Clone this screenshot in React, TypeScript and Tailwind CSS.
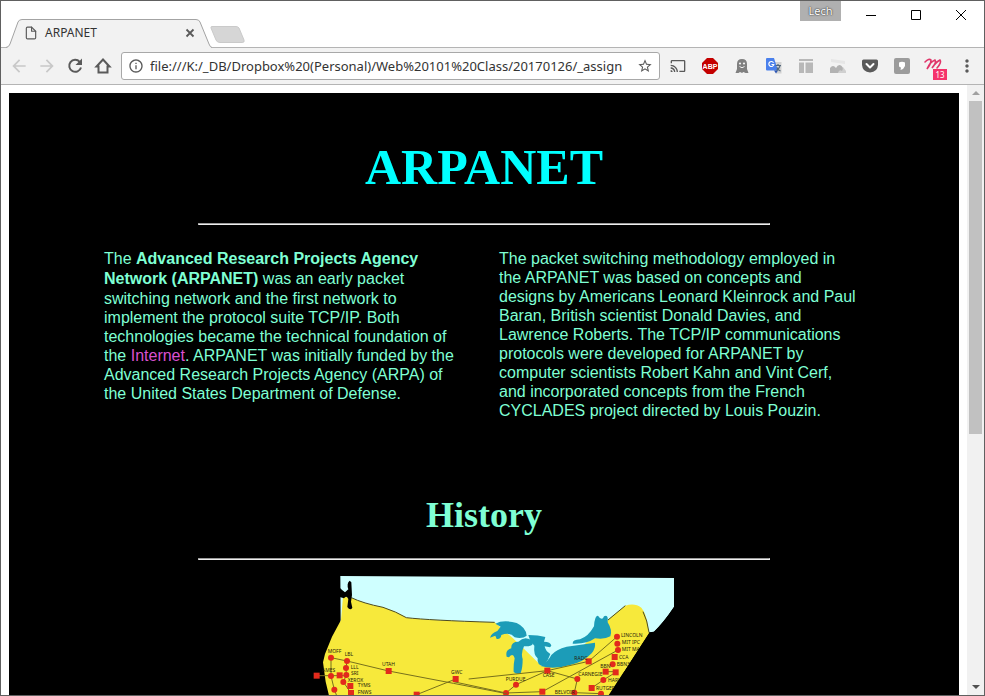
import React from "react";
import { FiFile } from "react-icons/fi";
import {
  MdArrowBack,
  MdArrowForward,
  MdInfoOutline,
  MdStarBorder,
  MdCast,
  MdMoreVert,
} from "react-icons/md";

type Node = [number, number, "c" | "s"];
type Label = [number, number, string];

function Marks({ nodes, labels }: { nodes: Node[]; labels: Label[] }) {
  return (
    <>
      {nodes.map(([x, y, kind]) =>
        kind === "c" ? (
          <circle key={`${x}-${y}`} cx={x} cy={y} r="9" fill="#e22a1c" />
        ) : (
          <rect key={`${x}-${y}`} x={x - 9} y={y - 9} width="18" height="18" fill="#e22a1c" />
        ),
      )}
      {labels.map(([x, y, text]) => (
        <text key={text} x={x} y={y} fontSize="15" fill="#26220a" className="font-['Noto_Sans',sans-serif]">
          {text}
        </text>
      ))}
    </>
  );
}

const westNodes: Node[] = [
  [93, 278, "c"], [141, 288, "c"], [138, 309, "c"], [139, 330, "c"], [119, 331, "s"],
  [93, 333, "c"], [50, 332, "s"], [130, 351, "c"], [151, 363, "s"], [153, 384, "s"],
  [103, 374, "c"], [266, 318, "s"], [467, 342, "s"], [350, 389, "s"],
];
const westLabels: Label[] = [
  [83, 263, "MOFF"], [134, 273, "LBL"], [152, 313, "LLL"], [153, 331, "SRI"], [143, 350, "XEROX"],
  [173, 367, "TYMS"], [173, 388, "FNWS"], [246, 303, "UTAH"], [453, 326, "GWC"], [66, 320, "AMES"],
];
const eastNodes: Node[] = [
  [411, 215, "c"], [412, 236, "c"], [414, 255, "c"], [404, 276, "s"], [398, 298, "c"],
  [377, 320, "s"], [407, 322, "s"], [370, 345, "c"], [335, 369, "s"], [363, 386, "c"],
  [326, 289, "s"], [292, 342, "c"], [202, 317, "s"], [108, 359, "c"], [78, 384, "c"],
  [187, 380, "s"], [283, 383, "c"],
];
const eastLabels: Label[] = [
  [423, 215, "LINCOLN"], [425, 236, "MIT IPC"], [425, 257, "MIT MAC"], [417, 281, "CCA"], [410, 303, "BBN30"],
  [361, 309, "BBN"], [384, 351, "HARV"], [348, 374, "RUTGERS"], [283, 285, "RADC"], [295, 333, "CARNEGIE"],
  [188, 336, "CASE"], [77, 347, "PURDUE"], [224, 387, "BELVOIR"],
];

function NetworkMap() {
  return (
    <svg viewBox="0 0 1086 360" className="w-[362px] shrink-0" role="img" aria-label="Map of the ARPANET">
      <path d="M82 3L1083 9V96Q1050 145 1023 170L1007 172L932 290H84Z" fill="#cfffff" />
      <path
        d="M90 65L115 68Q150 85 210 97Q250 110 280 128Q350 136 545 142L600 190L685 272L790 235L850 170L890 130L937 92Q965 82 985 98Q999 115 1003 145L1008 175L886 362H48L38 320L30 262L36 237L57 185L84 135Z"
        fill="#f7e93b"
      />
      <path d="M115 68Q150 85 210 97Q250 110 280 128Q350 136 545 142M885 135L937 92M990 110Q1003 135 1008 172" fill="none" stroke="#4c4a20" strokeWidth="3" />
      <path d="M110 17Q100 25 106 43L96 52Q86 44 80 38V66L93 70Q100 60 106 72L103 96Q112 108 118 98L114 80L117 60L115 22Z" fill="#000" />
      <g transform="translate(501 -30)">
        <path d="M30 218Q34 205 52 198L62 185L46 176Q70 163 110 174Q138 187 140 212Q128 222 104 217Q90 200 64 210Q62 224 50 222L46 212Z" fill="#1c9cb8" />
        <path d="M80 275Q75 255 94 250Q92 230 115 230Q135 210 158 228Q164 245 132 244Q122 265 128 282Q128 310 122 324Q110 330 101 321Q100 300 104 280Q99 262 87 277Z" fill="#1c9cb8" />
        <path d="M145 210Q175 210 196 216L192 230Q212 230 214 242L210 247L194 244Q196 258 211 267Q205 285 192 302Q170 303 173 280Q160 270 163 242Q150 230 145 210Z" fill="#1c9cb8" />
        <path d="M182 303Q203 292 214 270Q228 253 260 245L345 233Q347 250 335 265Q310 292 270 300Q220 315 182 303Z" fill="#1c9cb8" />
        <path d="M278 236Q277 224 300 223Q325 215 342 184Q344 150 354 152Q366 170 372 154Q386 146 383 172Q398 196 391 214Q375 224 345 220Q320 238 278 236Z" fill="#1c9cb8" />
        <path d="M-34 342L202 317L326 289L411 215M202 317L292 342L283 383L363 386M78 384L108 359L202 317M78 384L-80 350M78 384L187 380L414 255M377 320H407M335 369L370 345L407 322" fill="none" stroke="#77701c" strokeWidth="3" />
        <Marks nodes={eastNodes} labels={eastLabels} />
      </g>
      <g transform="translate(-39 -30)">
        <path d="M93 278L141 288L266 318L460 355M350 389L467 342M460 355L620 386M50 332H139M93 278V333L103 374L110 392M141 288L138 309L139 330L130 351L153 384" fill="none" stroke="#77701c" strokeWidth="3" />
        <Marks nodes={westNodes} labels={westLabels} />
      </g>
      <path d="M1009 174L888 362H1086V174Z" fill="#000" />
      <path d="M1083 96Q1050 145 1023 170L1009 174H1086V96Z" fill="#000" />
    </svg>
  );
}

function TitleBar() {
  return (
    <header className="flex h-[46px] shrink-0 bg-white">
      <div className="relative isolate mt-[18px] ml-[5px] flex h-7 w-[206px] items-center pr-[17px] pl-[18px]">
        <svg viewBox="0 0 206 29" className="absolute top-0 left-0 -z-10 h-[29px] w-[206px]" aria-hidden="true">
          <path d="M0 29Q3 28 4 25L12 3Q13 .5 16 .5H190Q193 .5 194 3L203 25Q204 28 206 29Z" fill="#f2f2f2" />
          <path d="M0 28.500Q3 28 4 25L12 3Q13 .5 16 .5H190Q193 .5 194 3L203 25Q204 28 206 28.500" fill="none" stroke="#a3a3a3" />
        </svg>
        <FiFile className="size-[14px] text-[#5a5a5a]" />
        <span className="ml-[7px] flex-1 font-['Noto_Sans',sans-serif] text-[12px] leading-4 text-[#333]">ARPANET</span>
        <button type="button" aria-label="Close tab">
          <svg viewBox="0 0 10 10" className="size-[10px]">
            <path d="M1.500 1.500L8.500 8.500M8.500 1.500L1.500 8.500" stroke="#5a5a5a" strokeWidth="1.800" />
          </svg>
        </button>
      </div>
      <button type="button" aria-label="New tab" className="mt-[25px] -ml-[2px] h-[17px] w-[35px]">
        <svg viewBox="0 0 35 17" className="h-[17px] w-[35px]">
          <path d="M2 .5H26Q28 .5 29 2L34 14Q35 16.500 32 16.500H10Q7 16.500 6 14L1 2Q.5 .5 2 .5Z" fill="#d6d6d6" stroke="#cacaca" />
        </svg>
      </button>
      <div className="ml-auto flex items-start">
        <button type="button" className="h-5 w-[41px] bg-[#b0b0b0] font-['Noto_Sans',sans-serif] text-[11px] leading-5 text-white [text-shadow:0_0_2px_#333,0_0_1px_#333]">
          Lech
        </button>
        <button type="button" aria-label="Minimize" className="ml-[7px] flex h-7 w-[46px] items-center justify-center">
          <svg viewBox="0 0 10 10" className="size-[10px]"><path d="M0 5.500H10" stroke="#000" /></svg>
        </button>
        <button type="button" aria-label="Maximize" className="flex h-7 w-[44px] items-center justify-center">
          <svg viewBox="0 0 10 10" className="size-[10px]"><path d="M.5 .5H9.500V9.500H.5Z" fill="none" stroke="#000" /></svg>
        </button>
        <button type="button" aria-label="Close" className="flex h-7 w-[46px] items-center justify-center">
          <svg viewBox="0 0 10 10" className="size-[10px]"><path d="M0 0L10 10M10 0L0 10" stroke="#000" /></svg>
        </button>
      </div>
    </header>
  );
}

function Extensions() {
  return (
    <div className="flex items-center gap-4 text-[#5a5a5a]">
      <button type="button" aria-label="Cast"><MdCast className="size-4" /></button>
      <button type="button" aria-label="Adblock Plus">
        <svg viewBox="0 0 16 16" className="size-4">
          <path d="M5 0H11L16 5V11L11 16H5L0 11V5Z" fill="#c40000" />
          <text x="8" y="10.500" textAnchor="middle" fontSize="7" fontWeight="700" fill="#fff" className="font-['Liberation_Sans',sans-serif]">ABP</text>
        </svg>
      </button>
      <button type="button" aria-label="Ghostery">
        <svg viewBox="0 0 16 16" className="size-4">
          <path d="M3 6Q3 1 8 1T13 6V11L14.500 15H11.500L9.500 14L8 15L6 14L4.500 15H1.500L3 11Z" fill="#808080" />
          <circle cx="6" cy="5.500" r="1.100" fill="#f2f2f2" /><circle cx="10" cy="5.500" r="1.100" fill="#f2f2f2" />
          <path d="M5.500 8.500Q8 11 10.500 8.500" fill="none" stroke="#f2f2f2" />
        </svg>
      </button>
      <button type="button" aria-label="Translate">
        <svg viewBox="0 0 16 16" className="size-4">
          <path d="M6 4H15.500V15.500H10Z" fill="#d2d2d2" />
          <path d="M1 0H8L12 12.500H1Q0 12.500 0 11.500V1Q0 0 1 0Z" fill="#4a80ec" />
          <path d="M8 12.500H12L10 15.500Z" fill="#2c56b5" />
          <path d="M7.500 4.700A2.500 2.500 0 1 0 7.800 6.500H5.500" fill="none" stroke="#fff" strokeWidth="1.200" />
          <path d="M9.500 7.500H15M12 6V7.500M14 8Q13 11 10.500 12.500M11 9.500Q12 12 14.500 13" fill="none" stroke="#51677c" strokeWidth="1.200" />
        </svg>
      </button>
      <button type="button" aria-label="Page layout">
        <svg viewBox="0 0 16 16" className="size-4">
          <path d="M1 1H15V3H1ZM1 4.500H6V15H1ZM7.500 4.500H15V15H7.500Z" fill="#b8b8b8" />
        </svg>
      </button>
      <button type="button" aria-label="Image tools">
        <svg viewBox="0 0 16 16" className="size-4">
          <path d="M1 1L15 3V6L1 4Z" fill="#e6e6e6" />
          <path d="M8 10L13 9L16 13V15H8Z" fill="#d0d0d0" />
          <path d="M0 15V10Q3 6 6 10Q8 6 11 7.500Q14 10 12 13Q9 11 8 15Z" fill="#b2b2b2" />
        </svg>
      </button>
      <button type="button" aria-label="Save to Pocket">
        <svg viewBox="0 0 16 16" className="size-4">
          <path d="M1.500 1.500H14.500Q16 1.500 16 3V7Q15.500 14 8 14.500Q.5 14 0 7V3Q0 1.500 1.500 1.500Z" fill="#5a5a5a" />
          <path d="M4.500 6L8 9.500L11.500 6" fill="none" stroke="#fff" strokeWidth="2" strokeLinecap="round" strokeLinejoin="round" />
        </svg>
      </button>
      <button type="button" aria-label="Privacy shield">
        <svg viewBox="0 0 16 16" className="size-4">
          <rect width="16" height="16" rx="2" fill="#9c9c9c" />
          <path d="M5 4.500Q8 3 11 4.500V8Q10 11 6.500 12L7 9.500Q5 9 5 8Z" fill="#fff" />
        </svg>
      </button>
      <button type="button" aria-label="Mail, 13 unread" className="relative -ml-px">
        <svg viewBox="0 0 16 16" className="size-4 overflow-visible">
          <path d="M0 4Q4 0 6 2Q6 6 2 11Q5 4 10 2Q12 4 7 10Q11 4 15 2Q17 4 12 10" fill="none" stroke="#e0366a" strokeWidth="1.600" strokeLinecap="round" />
        </svg>
        <span className="absolute top-[11px] left-2 h-[11px] w-[14px] bg-[#f5326b] text-center font-['Noto_Sans',sans-serif] text-[8px] leading-[11px] text-white">13</span>
      </button>
    </div>
  );
}

function Toolbar() {
  return (
    <div className="flex h-[38px] shrink-0 items-center border-y border-[#b4b4b4] bg-[#f2f2f2] pr-[7px] pl-2">
      <nav className="flex items-center gap-2 text-[#5a5a5a]">
        <button type="button" aria-label="Back" disabled className="text-[#c8c8c8]"><MdArrowBack className="size-5" /></button>
        <button type="button" aria-label="Forward" disabled className="text-[#c8c8c8]"><MdArrowForward className="size-5" /></button>
        <button type="button" aria-label="Reload">
          <svg viewBox="0 0 20 20" className="size-5">
            <path d="M14.700 5.800A6 6 0 1 0 16 11.500" fill="none" stroke="currentColor" strokeWidth="2" />
            <path d="M17 2.500V9H10.500Z" fill="currentColor" />
          </svg>
        </button>
        <button type="button" aria-label="Home">
          <svg viewBox="0 0 20 20" className="size-5">
            <path d="M10 3.500L16.500 10.500H14.500V16.500H5.500V10.500H3.500Z" fill="none" stroke="currentColor" strokeWidth="2" />
          </svg>
        </button>
      </nav>
      <form className="mr-[10px] ml-2 flex h-7 min-w-0 flex-1 items-center rounded-[3px] border border-[#a8a8a8] bg-white px-[6px] text-[#5a5a5a]">
        <MdInfoOutline className="size-4 shrink-0" />
        <input
          type="text"
          aria-label="Address"
          defaultValue="file:///K:/_DB/Dropbox%20(Personal)/Web%20101%20Class/20170126/_assign"
          className="mx-[6px] min-w-0 flex-1 bg-transparent font-['Noto_Sans',sans-serif] text-[13px] leading-5 text-[#333] outline-none"
        />
        <button type="button" aria-label="Bookmark"><MdStarBorder className="size-4" /></button>
      </form>
      <Extensions />
      <button type="button" aria-label="Menu" className="ml-4 text-[#5a5a5a]"><MdMoreVert className="size-5" /></button>
    </div>
  );
}

function Rule() {
  return <hr className="mx-auto box-content h-0 w-3/5 border border-t-[#9a9a9a] border-r-[#eee] border-b-[#eee] border-l-[#9a9a9a]" />;
}

function Scrollbar() {
  return (
    <div className="flex w-[17px] shrink-0 flex-col items-center bg-[#f1f1f1]">
      <button type="button" aria-label="Scroll up" className="flex h-4 w-full items-center justify-center">
        <svg viewBox="0 0 8 4" className="h-1 w-2"><path d="M0 4L4 0L8 4Z" fill="#a0a0a0" /></svg>
      </button>
      <div className="h-6/11 w-[13px] bg-[#c1c1c1]" />
      <button type="button" aria-label="Scroll down" className="mt-auto flex h-[17px] w-full items-center justify-center">
        <svg viewBox="0 0 8 4" className="h-1 w-2"><path d="M0 0L4 4L8 0Z" fill="#505050" /></svg>
      </button>
    </div>
  );
}

export default function App() {
  return (
    <div className="flex h-screen flex-col overflow-hidden border border-[#606060] bg-white">
      <TitleBar />
      <Toolbar />
      <div className="flex min-h-0 flex-1">
        <main className="min-w-0 flex-1 overflow-hidden px-2 pt-2">
          <article className="flex min-h-full flex-col bg-black font-['Liberation_Sans',Arial,sans-serif] text-[#7fffd4]">
            <h1 className="pt-12 pb-[30px] text-center font-['Liberation_Serif',serif] text-[50px] leading-[52px] font-bold text-[#00ffff]">
              ARPANET
            </h1>
            <Rule />
            <div className="mx-auto mt-6 grid w-4/5 grid-cols-2 gap-[30px] text-[16px] leading-[19px]">
              <p className="pr-1">
                The <strong className="leading-[20px]">Advanced Research Projects Agency Network (ARPANET)</strong> was an early packet
                switching network and the first network to implement the protocol suite TCP/IP. Both technologies became the
                technical foundation of the{" "}
                <a href="#internet" className="text-[#da50d0]">Internet</a>. ARPANET was initially funded by the Advanced Research
                Projects Agency (ARPA) of the United States Department of Defense.
              </p>
              <p className="pr-1">
                The packet switching methodology employed in the ARPANET was based on concepts and designs by Americans Leonard
                Kleinrock and Paul Baran, British scientist Donald Davies, and Lawrence Roberts. The TCP/IP communications
                protocols were developed for ARPANET by computer scientists Robert Kahn and Vint Cerf, and incorporated concepts
                from the French CYCLADES project directed by Louis Pouzin.
              </p>
            </div>
            <h2 className="pt-[76px] pb-6 text-center font-['Liberation_Serif',serif] text-[36px] leading-[38px] font-bold">
              History
            </h2>
            <Rule />
            <figure className="mt-[15px] flex justify-center pl-5">
              <NetworkMap />
            </figure>
          </article>
        </main>
        <Scrollbar />
      </div>
    </div>
  );
}
